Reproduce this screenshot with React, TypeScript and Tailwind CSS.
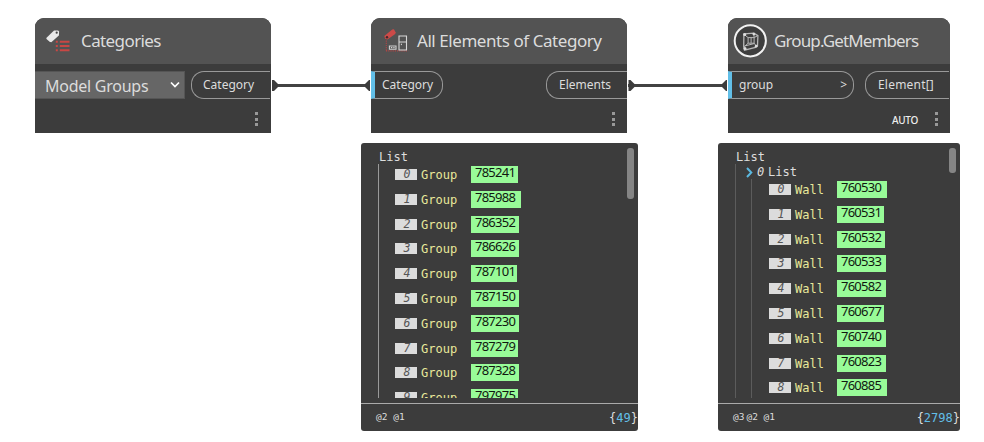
import type { ReactNode } from 'react';

const SANS = "font-['Noto_Sans','Liberation_Sans',sans-serif]";
const MONO = "font-['DejaVu_Sans_Mono','Liberation_Mono',monospace]";

function TagListIcon() {
  return (
    <svg width="26" height="26" viewBox="0 0 26 26" className="block">
      <path d="M.3 9.9 8 2.6l4.1-.2 1 1-.2 4.2L5.3 14.3 3.6 13.8.5 11Z" fill="#e8e8e8" />
      <circle cx="10.7" cy="4.7" r="1.1" fill="#444" />
      <path d="M9.8 13.7h2m2 0h9.7M9.8 18h2m2 0h9.7M9.8 22.2h2m2 0h9.7" stroke="#c94744" strokeWidth="2" />
    </svg>
  );
}

function FurnitureIcon() {
  return (
    <svg width="26" height="26" viewBox="-0.5 -0.5 26 26" className="block">
      <path d="M-.2 7.4 7.7 1.1l1.7-.3L11.2 4l-.5 1.5L3 11.1l-2.4-.8Z" fill="#cb4a48" />
      <circle cx="2.5" cy="8.8" r="1.2" fill="#43272a" />
      <path d="M1.8 12v10.2M1.5 22.4h22.2" stroke="#b14545" strokeWidth="1.1" strokeDasharray="1.2 1" fill="none" />
      <path d="M14.5 7.5h7.5v14h-7.5Zm0 6h7.5" stroke="#d8d8d8" strokeWidth="1.1" fill="none" />
      <path d="M16.9 15.2v1.4" stroke="#d8d8d8" />
      <path d="M4.9 17.5h6.6v3.3H4.9Z" stroke="#d0d0d0" strokeWidth="1.1" fill="none" />
      <path d="M6.4 19.2h1.4m1 0h1.3" stroke="#d0d0d0" strokeWidth="1.2" />
    </svg>
  );
}

function GroupIcon() {
  return (
    <svg width="34" height="36" viewBox="-0.5 -0.6 34 36" className="block">
      <circle cx="16.8" cy="17.2" r="15.6" fill="#3e3e3e" stroke="#f1f1f1" strokeWidth="2" />
      <path d="m10.4 10.3 10-.8 4 2.6-.4 10-2 1.7-11 2.7-.8-3.7Z" fill="none" stroke="#b8b8b8" strokeWidth="1.3" />
      <path d="m10.6 10.8 4 3.2h6l3.4-1.8M14.6 14v5.6h6V14M14.6 19.6l-4 3.8m10-3.8 2 2.6M17.6 14v5.6M20.4 9.7l.2 4.3M11 22.4l10-2.5" fill="none" stroke="#b8b8b8" strokeWidth="1" />
      <circle cx="11.2" cy="11" r="1.5" fill="#ddd" />
      <circle cx="20.3" cy="10.5" r="1.3" fill="#ddd" />
      <circle cx="11.5" cy="25" r="1.5" fill="#ddd" />
      <circle cx="22.7" cy="22.6" r="1.4" fill="#ddd" />
    </svg>
  );
}

function Dots({ className }: { className: string }) {
  return (
    <div className={`flex h-3.5 flex-col justify-between ${className}`}>
      <i className="size-[3px] bg-[#999]" />
      <i className="size-[3px] bg-[#999]" />
      <i className="size-[3px] bg-[#999]" />
    </div>
  );
}

function Node({ place, icon, title, titleClass, dotsClass, children, auto }: {
  place: string; icon: ReactNode; title: string; titleClass: string; dotsClass: string; children: ReactNode; auto?: boolean;
}) {
  return (
    <section className={`absolute top-[18px] flex h-[115px] flex-col overflow-hidden rounded-t-[9px] bg-[#3c3c3c] text-[#dcdcdc] ${place}`}>
      <header className="flex h-[46px] shrink-0 items-center bg-[#535353]">
        {icon}
        <h2 className={`whitespace-nowrap text-[17px] leading-6 ${titleClass}`}>{title}</h2>
      </header>
      <div className="mt-[7px] flex h-7 shrink-0 justify-between">{children}</div>
      <footer className="mt-[13px] flex items-start justify-end">
        {auto && <span className="mr-[17px] text-[10px] font-medium leading-[16px] tracking-[-0.3px] text-[#eee]">AUTO</span>}
        <Dots className={dotsClass} />
      </footer>
    </section>
  );
}

function Port({ children, side, className }: { children: ReactNode; side: 'in' | 'out'; className: string }) {
  const shape = side === 'in' ? 'rounded-r-[13px] border-l-4 border-l-[#62bfe8]' : 'rounded-l-[13px] border-r-0';
  return (
    <div className={`flex items-center whitespace-nowrap border border-[#999] text-[12px] leading-4 ${shape} ${className}`}>
      {children}
    </div>
  );
}

type Item = [string, string];

function Rows({ label, items, gap }: { label: string; items: Item[]; gap: string }) {
  return (
    <>
      {items.map(([id, width], i) => (
        <div key={id} className="flex h-[24.8px] items-start">
          <span className="mt-[3px] flex h-[11px] w-[22px] shrink-0 items-center justify-center bg-[#dcdcdc] pl-0.5 text-[11.5px] italic leading-[11px] text-[#555]">{i}</span>
          <span className={`ml-1 mt-[2px] shrink-0 text-[12px] leading-[14px] text-[#e9e99b] ${gap}`}>{label}</span>
          <span className={`h-[17px] shrink-0 bg-[#98fb98] pl-1 text-[13px] leading-[13px] tracking-[-0.75px] text-[#101810] ${SANS} ${width}`}>{id}</span>
        </div>
      ))}
    </>
  );
}

function Panel({ place, scroll, levels, count, children }: {
  place: string; scroll: string; levels: ReactNode; count: string; children: ReactNode;
}) {
  return (
    <section className={`absolute top-[143px] flex h-[288px] flex-col overflow-hidden rounded-[3px] bg-[#3c3c3c] text-[12px] text-[#dedede] ${MONO} ${place}`}>
      <div className="flex h-[255px] shrink-0 justify-between overflow-hidden">
        <div className="pl-[17px] pt-[7px]">
          <div className="h-[14px] pl-px leading-[14px]">List</div>
          {children}
        </div>
        <i className={`mr-1 mt-[5px] w-[7px] shrink-0 rounded-[3px] bg-[#858585] ${scroll}`} />
      </div>
      <footer className="mt-[5px] flex h-[29px] items-center justify-between border-t border-[#aaa] pl-[15px]">
        <span className="whitespace-pre text-[9.5px]">{levels}</span>
        <span>{'{'}<b className="font-normal text-[#62bfe8]">{count}</b>{'}'}</span>
      </footer>
    </section>
  );
}

const groups: Item[] = [
  ['785241', 'w-[47px]'], ['785988', 'w-[50px]'], ['786352', 'w-[48px]'], ['786626', 'w-[48px]'],
  ['787101', 'w-[46px]'], ['787150', 'w-[48px]'], ['787230', 'w-[48px]'], ['787279', 'w-[47px]'],
  ['787328', 'w-[48px]'], ['797975', 'w-[47px]'],
];
const walls: Item[] = [
  ['760530', 'w-[50px]'], ['760531', 'w-[47px]'], ['760532', 'w-[48px]'], ['760533', 'w-[49px]'],
  ['760582', 'w-[49px]'], ['760677', 'w-[47px]'], ['760740', 'w-[49px]'], ['760823', 'w-[49px]'],
  ['760885', 'w-[50px]'],
];

export default function App() {
  return (
    <main className={`relative h-[442px] w-[984px] overflow-hidden bg-white ${SANS}`}>
      <svg className="absolute inset-0" width="984" height="442">
        <path d="M272 85.5h97M628 85.5h98" stroke="#424242" strokeWidth="3" />
        <path d="M272 80h2l4 4v3l-4 4h-2ZM370 80h-1l-4 4v3l4 4h1ZM628.5 80h2l4 4v3l-4 4h-2ZM727 80h-1l-4 4v3l4 4h1Z" fill="#3c3c3c" />
      </svg>

      <Node place="left-[35px] w-[236px]" title="Categories" titleClass="tracking-[-0.6px]" dotsClass="mr-[13px]"
        icon={<div className="ml-[11px] mr-[9px]"><TagListIcon /></div>}>
        <div className="flex w-[150px] items-center justify-between border border-l-0 border-[#555] bg-[#666] pl-[10px] pr-1 text-[16px]">
          <span className="whitespace-nowrap pt-0.5 tracking-[-0.25px]">Model Groups</span>
          <svg width="10" height="8" viewBox="0 0 10 8"><path d="m1 1.5 4 4 4-4" fill="none" stroke="white" strokeWidth="1.7" /></svg>
        </div>
        <Port side="out" className="mr-px w-[79px] pl-[11px]">Category</Port>
      </Node>

      <Node place="left-[371px] w-[256px]" title="All Elements of Category" titleClass="tracking-[-0.44px]" dotsClass="mr-3"
        icon={<div className="ml-[13px] mr-[7px]"><FurnitureIcon /></div>}>
        <Port side="in" className="w-[72px] pl-[7px]">Category</Port>
        <Port side="out" className="w-[81px] pl-3">Elements</Port>
      </Node>

      <Node auto place="left-[728px] w-[222px]" title="Group.GetMembers" titleClass="tracking-[-0.88px]" dotsClass="mr-3"
        icon={<div className="ml-[5px] mr-[7px]"><GroupIcon /></div>}>
        <Port side="in" className="w-[126px] justify-between pl-[7px] pr-1.5"><span>group</span><span>&gt;</span></Port>
        <Port side="out" className="mr-px w-[84px] pl-3 tracking-[0.2px]">Element[]</Port>
      </Node>

      <Panel place="left-[361px] w-[277px]" scroll="h-[51px]" levels="@2 @1" count="49">
        <div className="h-[234px] overflow-hidden border-l border-[#999] pl-4 pt-[2px]">
          <Rows label="Group" items={groups} gap="w-[50px]" />
        </div>
      </Panel>

      <Panel place="left-[718px] w-[242px]" scroll="h-[25px]" levels={<>@3<span className="pl-[2px]">@2 @1</span></>} count="2798">
        <div className="h-[234px] overflow-hidden border-l border-[#5c5c5c] pl-[10px]">
          <div className="flex h-[15px] items-center pt-px leading-[15px]">
            <svg width="7" height="11" viewBox="0 0 7 11"><path d="m1 1 4.3 4.5L1 10" fill="none" stroke="#5bb8df" strokeWidth="2" /></svg>
            <span className="ml-1 w-[11px] italic">0</span><span>List</span>
          </div>
          <div className="ml-[5px] h-[220px] border-l border-[#5c5c5c] pl-[17px] pt-[2px]">
            <Rows label="Wall" items={walls} gap="w-[42px]" />
          </div>
        </div>
      </Panel>
    </main>
  );
}
